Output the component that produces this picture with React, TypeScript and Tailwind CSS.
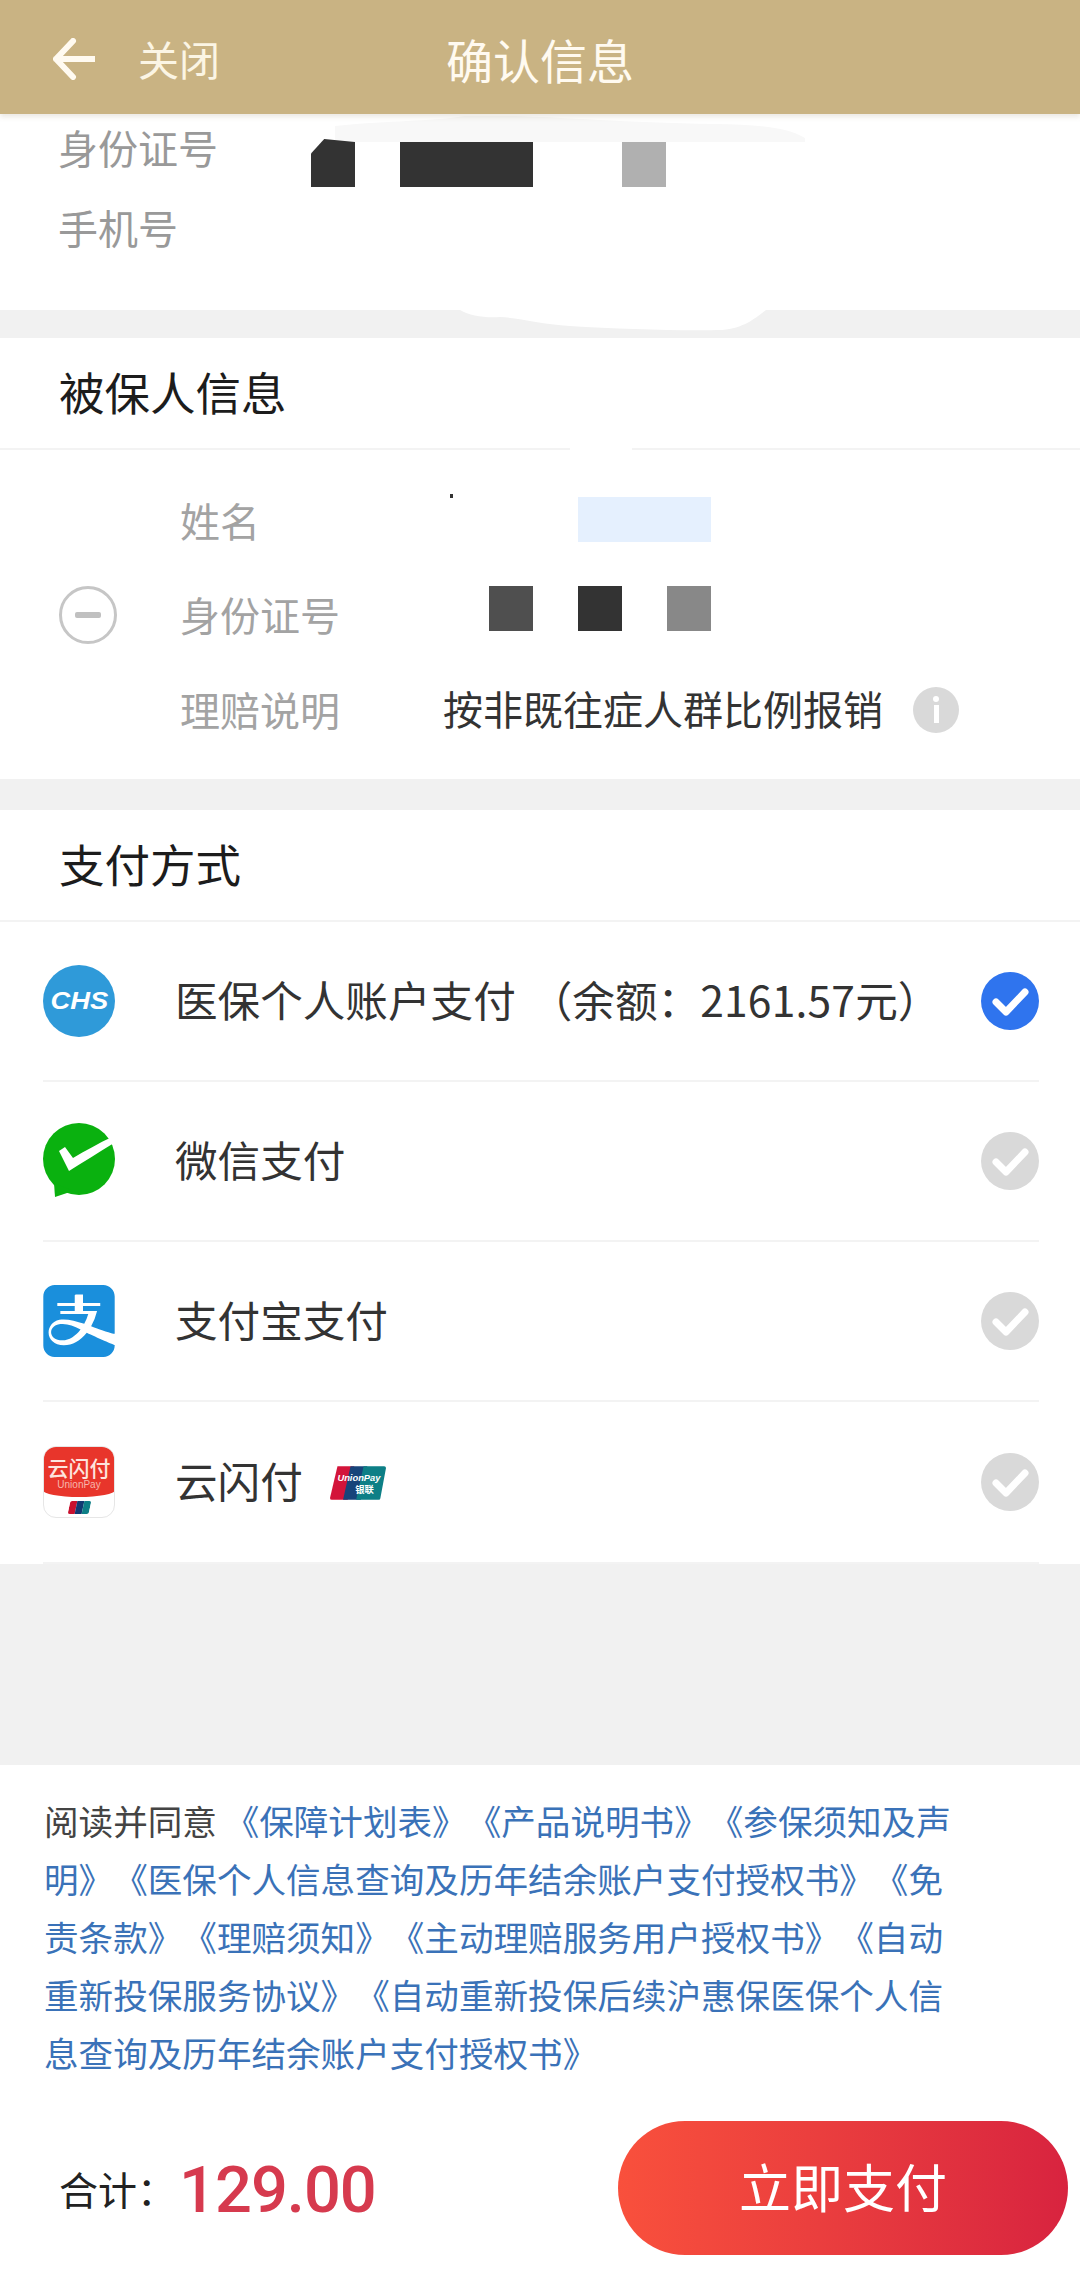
import { SiAlipay } from "react-icons/si";

function Check({ active }: { active?: boolean }) {
  return (
    <svg width="58" height="58" viewBox="0 0 58 58" className="shrink-0">
      <circle cx="29" cy="29" r="29" fill={active ? "#2f74ee" : "#d9d9d9"} />
      <path d="M15 30 L25 40 L44 20" fill="none" stroke="#fff" strokeWidth="7" strokeLinecap="round" strokeLinejoin="round" />
    </svg>
  );
}

function ChsIcon() {
  return (
    <div className="w-[72px] h-[72px] rounded-full bg-[#2f9ad9] flex items-center justify-center">
      <span className="text-white text-[24px] font-bold italic scale-x-[1.14] font-['Liberation_Sans',sans-serif]">CHS</span>
    </div>
  );
}

function WechatIcon() {
  return (
    <svg width="72" height="76" viewBox="0 0 72 76">
      <circle cx="36" cy="36" r="36" fill="#0ab10f" />
      <path d="M11 60 L12 74 L30 68 z" fill="#0ab10f" />
      <path d="M16 28 L22 24 L30 35 C42 28 56 20 69 14 L71 20 C55 30 40 39 26 48 Z" fill="#fff" />
    </svg>
  );
}

function UnionIcon() {
  return (
    <div className="w-[72px] h-[72px] rounded-[13px] border border-[#e6e6e6] overflow-hidden bg-white flex flex-col items-center">
      <div className="w-[72px] h-[50px] shrink-0 bg-[#e8352b] rounded-b-[50%_14%] flex flex-col items-center leading-none pt-[9px]">
        <span className="text-[21px] font-medium leading-[22px] text-[#fde4de]">云闪付</span>
        <span className="text-[10px] font-['Liberation_Sans',sans-serif] leading-[13px] text-[#f7b5ad]">UnionPay</span>
      </div>
      <div className="flex mt-[4px] -skew-x-12 rounded-[2px] overflow-hidden">
        <div className="w-[7px] h-[13px] bg-[#c8102e]" />
        <div className="w-[7px] h-[13px] bg-[#123a72]" />
        <div className="w-[7px] h-[13px] bg-[#0e7f86]" />
      </div>
    </div>
  );
}

function UnionBadge() {
  return (
    <svg width="56" height="34" viewBox="0 0 60 36" className="ml-[27px] mt-[7px]">
      <path d="M8 0h18l-7 36H2a2 2 0 0 1-2-2z" fill="#d3143a" />
      <path d="M22 0h18l-7 36H14z" fill="#17447a" />
      <path d="M36 0h22a2 2 0 0 1 2 2l-6 32a2 2 0 0 1-2 2H28z" fill="#0d7f86" />
      <text x="31" y="16" textAnchor="middle" fontSize="10" fontWeight="700" fontStyle="italic" fill="#fff" fontFamily="Liberation Sans">UnionPay</text>
      <text x="37" y="29" textAnchor="middle" fontSize="10" fill="#fff" fontWeight="700">银联</text>
    </svg>
  );
}

function PayRow({ icon, children, active, last }: { icon: React.ReactNode; children: React.ReactNode; active?: boolean; last?: boolean }) {
  return (
    <div className={(last ? "h-[162px]" : "h-[160px]") + " ml-[43px] mr-[41px] flex items-center border-b-2 border-[#f3f3f3]"}>
      <div className="w-[132px] shrink-0 flex items-center">{icon}</div>
      <div className="flex-1 flex items-center text-[42.6px] text-[#333333] pb-[5px]">{children}</div>
      <Check active={active} />
    </div>
  );
}

function SectionTitle({ children }: { children: React.ReactNode }) {
  return <div className="h-[112px] shrink-0 pl-[59px] pb-[4px] flex items-center border-b-2 border-[#f3f3f3] text-[45.5px] text-[#1c1c1c]">{children}</div>;
}

function Link({ children }: { children: React.ReactNode }) {
  return <span className="text-[#3a72b8]">{children}</span>;
}

export default function App() {
  return (
    <div className="w-[1080px] h-[2280px] bg-white flex flex-col overflow-hidden [text-spacing-trim:space-all] font-['Noto_Sans_CJK_SC','Noto_Sans',sans-serif]">
      {/* header */}
      <div className="h-[114px] shrink-0 bg-[#c9b383] grid grid-cols-[1fr_auto_1fr] items-center pt-[4px] relative z-10 shadow-[0_3px_5px_rgba(120,100,60,0.15)]">
        <div className="flex items-center pl-[53px]">
          <svg width="42" height="42" viewBox="0 0 42 42">
            <path d="M20 3 L3 21 L20 39 M3 21 H41" fill="none" stroke="#fffaf0" strokeWidth="6" strokeLinecap="round" strokeLinejoin="round" />
          </svg>
          <span className="ml-[43px] text-[41px] text-[#fbf5e4]">关闭</span>
        </div>
        <div className="text-[47px] text-[#fffaf0]">确认信息</div>
        <div />
      </div>

      {/* applicant, cut off by the scroll */}
      <div className="h-[196px] shrink-0 relative pt-[9px] pl-[58px] flex flex-col gap-[32px] text-[40px] text-[#999999]">
        <svg width="470" height="30" viewBox="0 0 470 30" className="absolute left-[335px] top-[2px]">
          <path d="M0 10 C60 4 90 6 130 0 C200 -2 260 6 380 8 C420 9 450 10 470 22 L470 26 L0 26 Z" fill="#f8f8f8" />
        </svg>
        <div className="h-[48px] flex items-center relative">
          <span className="w-[253px]">身份证号</span>
          <div className="w-[44px] h-[48px] mt-[32px] bg-[#333333] [clip-path:polygon(30%_0,100%_6%,100%_100%,0_100%,0_30%)]" />
          <div className="w-[133px] h-[45px] mt-[35px] ml-[45px] bg-[#333333]" />
          <div className="w-[44px] h-[45px] mt-[35px] ml-[89px] bg-[#b0b0b0]" />
        </div>
        <div className="h-[48px] flex items-center">手机号</div>
      </div>

      <div className="h-[28px] shrink-0 bg-[#f1f1f1] relative">
        <svg width="310" height="22" viewBox="0 0 310 22" className="absolute left-[460px] top-0">
          <path d="M0 0 C10 6 25 8 40 7 C60 8 80 14 110 16 C160 19 220 21 262 20 C285 18 295 8 306 0 Z" fill="#ffffff" />
        </svg>
      </div>

      {/* insured */}
      <div className="relative shrink-0">
        <SectionTitle>被保人信息</SectionTitle>
        <div className="absolute left-[570px] bottom-0 w-[62px] h-[2px] bg-white" />
      </div>
      <div className="h-[329px] shrink-0 flex items-center pl-[59px]">
        <div className="w-[58px] h-[58px] rounded-full border-[3px] border-[#c6c6c6] flex items-center justify-center shrink-0">
          <div className="w-[26px] h-[6px] rounded-[2px] bg-[#c0c0c0]" />
        </div>
        <div className="ml-[63px] flex flex-col text-[40px] text-[#a3a3a3]">
          <div className="h-[95px] flex items-center relative">
            <span className="w-[398px]">姓名</span>
            <div className="w-[133px] h-[45px] bg-[#e5f0fe]" />
            <div className="absolute left-[270px] top-[22px] w-[3px] h-[4px] bg-[#333333]" />
          </div>
          <div className="h-[95px] flex items-center">
            <span className="w-[309px] mb-[2px]">身份证号</span>
            <div className="w-[44px] h-[45px] mb-[13px] bg-[#4f4f4f]" />
            <div className="w-[44px] h-[45px] mb-[13px] ml-[45px] bg-[#333333]" />
            <div className="w-[44px] h-[45px] mb-[13px] ml-[45px] bg-[#888888]" />
          </div>
          <div className="h-[95px] flex items-center">
            <span className="w-[263px] mb-[2px]">理赔说明</span>
            <span className="text-[40px] text-[#333333] whitespace-nowrap mb-[4px]">按非既往症人群比例报销</span>
            <div className="ml-[30px] w-[46px] h-[46px] rounded-full bg-[#d9d9d9] flex flex-col items-center justify-center gap-[3px]">
              <div className="w-[6px] h-[6px] rounded-full bg-white" />
              <div className="w-[5px] h-[18px] bg-white" />
            </div>
          </div>
        </div>
      </div>

      <div className="h-[31px] shrink-0 bg-[#f1f1f1]" />

      {/* payment */}
      <SectionTitle>支付方式</SectionTitle>
      <PayRow icon={<ChsIcon />} active>
        <span>医保个人账户支付</span>
        <span className="ml-[14px] whitespace-nowrap">（余额：<span className="tracking-[0.2px]">2161.57</span>元）</span>
      </PayRow>
      <PayRow icon={<WechatIcon />}>微信支付</PayRow>
      <PayRow icon={<SiAlipay size={72} color="#1a8fdc" />}>支付宝支付</PayRow>
      <PayRow icon={<UnionIcon />} last>
        <span>云闪付</span>
        <UnionBadge />
      </PayRow>

      <div className="flex-1 bg-[#f1f1f1]" />

      {/* agreement and footer */}
      <div className="h-[515px] shrink-0 bg-white">
        <p className="w-[926px] ml-[44px] pt-[26px] text-[34.6px] leading-[58px] text-[#444444]">
          阅读并同意
          <Link> 《保障计划表》《产品说明书》《参保须知及声明》《医保个人信息查询及历年结余账户支付授权书》《免责条款》《理赔须知》《主动理赔服务用户授权书》《自动重新投保服务协议》《自动重新投保后续沪惠保医保个人信息查询及历年结余账户支付授权书》</Link>
        </p>
        <div className="flex items-center pl-[59px] pr-[12px] mt-[40px]">
          <span className="w-[120px] text-[39px] text-[#222222]">合计：</span>
          <span className="text-[65px] font-medium tracking-[-1px] mt-[6px] text-[#d63a4e] font-['Roboto',sans-serif]">129.00</span>
          <button className="ml-auto w-[450px] h-[134px] pb-[4px] rounded-full bg-linear-to-r from-[#f9503c] to-[#d8233f] text-white text-[52px]">立即支付</button>
        </div>
      </div>
    </div>
  );
}
